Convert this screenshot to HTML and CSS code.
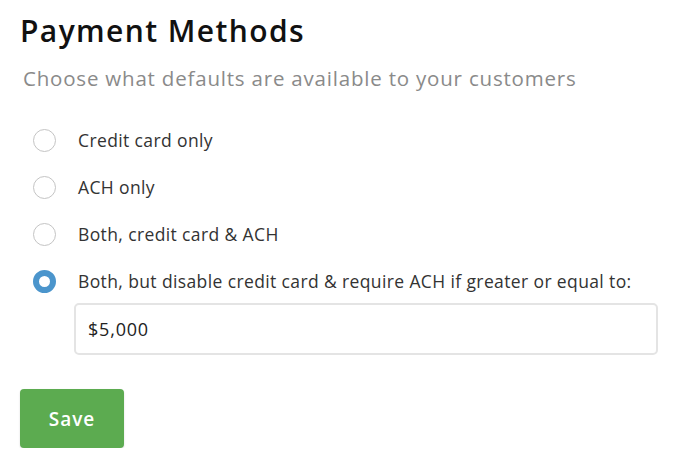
FILE: index.html
```html
<!DOCTYPE html>
<html>
<head>
<meta charset="utf-8">
<link rel="stylesheet" href="styles.css">
</head>
<body>
<div class="page">
  <h1 class="title">Payment Methods</h1>
  <p class="subtitle">Choose what defaults are available to your customers</p>
  <div class="options">
    <label class="option"><span class="radio"></span><span class="label">Credit card only</span></label>
    <label class="option"><span class="radio"></span><span class="label">ACH only</span></label>
    <label class="option"><span class="radio"></span><span class="label">Both, credit card &amp; ACH</span></label>
    <label class="option"><span class="radio checked"></span><span class="label">Both, but disable credit card &amp; require ACH if greater or equal to:</span></label>
  </div>
  <div class="amount">$5,000</div>
  <button class="save">Save</button>
</div>
</body>
</html>
```

FILE: styles.css
```css
html, body {
  margin: 0;
  padding: 0;
  background: #ffffff;
}
.page {
  font-family: "Open Sans", "Liberation Sans", sans-serif;
  padding: 10px 20px 0 20px;
  display: flex;
  flex-direction: column;
  align-items: flex-start;
}
.title {
  margin: 0;
  font-size: 30px;
  font-weight: 600;
  letter-spacing: 1.4px;
  color: #111111;
  line-height: 42px;
}
.subtitle {
  margin: 12px 0 0 3px;
  font-size: 20.5px;
  letter-spacing: 0.8px;
  color: #8a8a8a;
  line-height: 28px;
}
.options {
  margin-top: 36px;
  display: flex;
  flex-direction: column;
  gap: 23px;
}
.option {
  display: flex;
  align-items: center;
  height: 24px;
}
.radio {
  width: 23px;
  height: 23px;
  border: 1.5px solid #c4c4c4;
  border-radius: 50%;
  margin-left: 12.5px;
  box-sizing: border-box;
  flex: none;
}
.radio.checked {
  border: 6px solid #4b95cc;
}
.label {
  margin-left: 22.5px;
  font-size: 17.5px;
  font-weight: 500;
  letter-spacing: 0.38px;
  color: #333333;
}
.amount {
  margin: 10px 0 0 54px;
  width: 584px;
  height: 52px;
  box-sizing: border-box;
  border: 2px solid #e4e4e4;
  border-radius: 5px;
  padding: 0 12px;
  display: flex;
  align-items: center;
  font-size: 18px;
  letter-spacing: 0.8px;
  color: #222222;
}
.save {
  margin-top: 34px;
  width: 104px;
  height: 59px;
  border: none;
  border-radius: 4px;
  background: #5cab50;
  color: #ffffff;
  font-family: "Open Sans", "Liberation Sans", sans-serif;
  font-size: 19px;
  font-weight: 600;
  letter-spacing: 1px;
  box-shadow: 0 1px 2px rgba(0,0,0,0.15);
}
```
